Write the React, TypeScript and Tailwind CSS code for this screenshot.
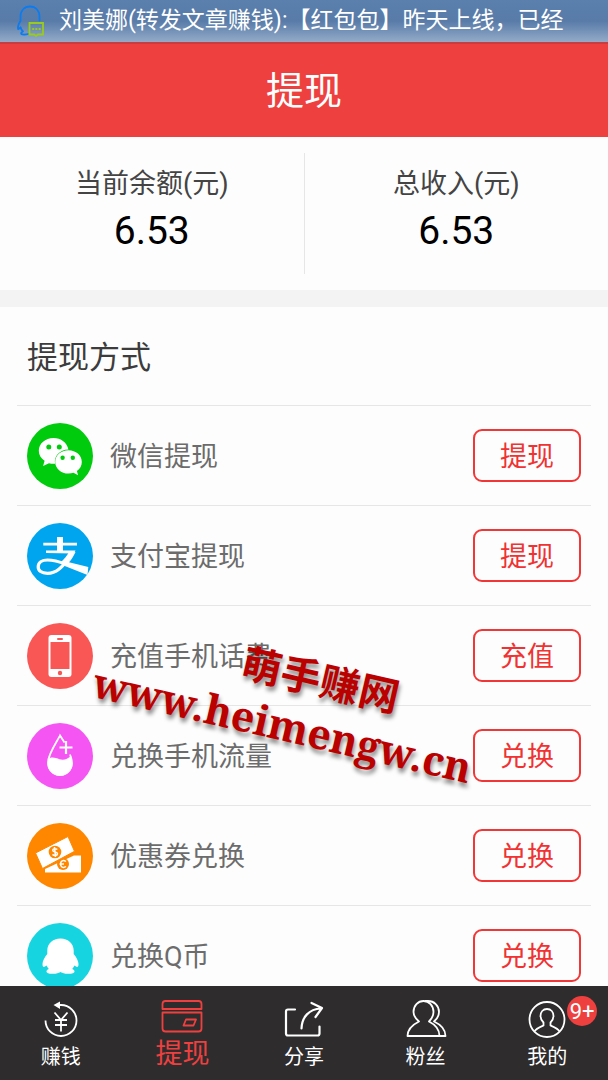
import React, { useState } from "react";

type TabId = "earn" | "withdraw" | "share" | "fans" | "mine";

interface Method {
  id: string;
  label: string;
  action: string;
  color: string;
  icon: React.ReactNode;
}

// Status bar notification icon
const QqMessageIcon: React.FC = () => (
  <svg className="w-7 h-8 shrink-0" viewBox="0 0 28 32" fill="none" aria-hidden="true">
    <path
      d="M23.500 15.500V11.500C23.500 5.500 19.500 1.500 14 1.500S4.500 5.500 4.500 11.500v4.500c-2 3-3 5.500-2.400 8 1 .2 1.700-.6 2.400-1.700.4 1.700 1.200 3 2.500 4.200-1.800.8-2.300 1.600-1.600 2.500.8.800 4.600.7 6.600 0"
      stroke="#0a7cf0"
      strokeWidth="1.800"
      strokeLinejoin="round"
      strokeLinecap="round"
    />
    <path d="M13.500 18h13.500v11.500h-5l-2 1.500-2-1.500h-4.500z" stroke="#9acb1c" strokeWidth="1.800" />
    <path d="M16.200 24h2m1.200 0h2m1.200 0h2" stroke="#9acb1c" strokeWidth="2" />
  </svg>
);

// Payment method glyphs, drawn inside a 66px disc
const WechatGlyph = (
  <>
    <path
      fill="#fff"
      d="M26.500 15c-8.200 0-14.700 5.600-14.700 12.800 0 4.200 2.200 7.600 5.800 9.900l-1.500 5.400 5.900-2.900c2 .5 3.700.6 6.100.5-1.500-7.300 4.500-14 13.300-14.200C40 19.500 34 15 26.500 15z"
    />
    <path
      fill="#fff"
      d="M41.500 27.300c-7.400 0-13.300 5-13.300 11.600s5.900 11.700 13.300 11.700c1.900 0 3.500-.3 5-.8l4.600 2.500-1.200-4.300c3-2.200 4.900-5.200 4.900-9.100 0-6.600-5.900-11.600-13.300-11.600z"
    />
    <g fill="#00cb0c">
      <circle cx="21.800" cy="24" r="2.500" />
      <circle cx="32.300" cy="24" r="2.500" />
      <circle cx="35.600" cy="34.700" r="2.200" />
      <circle cx="45.800" cy="34.700" r="2.200" />
    </g>
  </>
);

const AlipayGlyph = (
  <>
    <path fill="#fff" d="M30 14h6v5.800h14v2.800H36v5h12.500l-1.500 3-28-.6v-2.400h11v-5H16.300v-2.800H30z" />
    <path fill="#fff" d="M42 29h6.500c-2 4.500-4 7.500-6.500 10.300L61.300 44l-.8 8L36.500 42.500l-3-3c3.600-3 6.500-7 8.500-10.500z" />
    <path
      d="M41 36.500C35 44 29.500 50.300 20.500 50.300c-6 0-9.300-2.600-9.300-6.300 0-4.400 3.900-7 9.300-7 6.500 0 12.500 2 18.500 4.300"
      fill="none"
      stroke="#fff"
      strokeWidth="3.200"
    />
  </>
);

const PhoneGlyph = (
  <>
    <rect x="21.500" y="12" width="23" height="42" rx="3" fill="#fff" />
    <rect x="23.500" y="19" width="19" height="27" fill="#f95756" />
    <rect x="30" y="15" width="6" height="2" rx="1" fill="#f95756" />
    <circle cx="33" cy="50" r="2.200" fill="#f95756" />
  </>
);

const DropGlyph = (
  <>
    <path
      d="M37.500 19.500L33 12.500c-2 4.500-12 18.500-12 27A12 12 0 0 0 45 40.500c0-3.500-1-6.500-2-9"
      fill="none"
      stroke="#fff"
      strokeWidth="1.800"
    />
    <path
      fill="#fff"
      d="M21.500 36c3-2.500 7-1.200 11 .2 4 1.200 8 0 11.500-3.200 1 3 1.400 5 1.400 7.400a12.400 12.400 0 0 1-24.800 0c0-1.500.3-3 .9-4.400z"
    />
    <path d="M39 18v13M32.500 24.500h13" stroke="#fff" strokeWidth="2.200" />
  </>
);

const CouponGlyph = (
  <>
    <path fill="#fff" d="M18 46l29-13.500h7v17H18z" />
    <circle cx="36" cy="41" r="6" fill="#ff8700" />
    <path d="M39 38.500c-3-2-5.500-.5-5.500 2.500s2.500 4.500 5.500 2.500M32.500 41H37" fill="none" stroke="#fff" strokeWidth="1.500" />
    <path fill="#fff" stroke="#ff8700" strokeWidth="1" d="M8.500 30L41 13.500l6.500 14.800L15.500 45.500z" />
    <circle cx="28" cy="29" r="6.300" fill="#ff8700" />
    <path
      d="M30.300 26.500c-1.500-1.400-4.600-1-4.600.8 0 2.200 4.800 1.200 4.800 3.500 0 2-3.400 2.200-5 .6M27.500 24l1 10"
      fill="none"
      stroke="#fff"
      strokeWidth="1.500"
    />
  </>
);

const PenguinGlyph = (
  <path
    fill="#fff"
    d="M33.500 15.500c-7.800 0-13.200 5-13.200 12v3.500c-2.800 3.500-4.800 7-4.800 10 0 2.500.7 3.200 1.500 3 1.200-.5 1.800-1 2.500-1.500.6 1 1.300 2.300 2.300 3.500-1.500.6-2.300 1.300-2.300 2.500 0 2 3.500 2.500 7 2.300 2.800-.2 5-.9 7-1.900 2 1 4.200 1.700 7 1.900 3.500.2 7-.3 7-2.300 0-1.200-.8-1.900-2.300-2.500 1-1.200 1.700-2.500 2.300-3.500.7.5 1.300 1 2.500 1.500.8.200 1.500-.5 1.500-3 0-3-2-6.500-4.800-10v-3.500c0-7-5.400-12-13.200-12z"
  />
);

const METHODS: Method[] = [
  { id: "wechat", label: "微信提现", action: "提现", color: "text-[#00cb0c]", icon: WechatGlyph },
  { id: "alipay", label: "支付宝提现", action: "提现", color: "text-[#00a5f0]", icon: AlipayGlyph },
  { id: "phone", label: "充值手机话费", action: "充值", color: "text-[#f95756]", icon: PhoneGlyph },
  { id: "data", label: "兑换手机流量", action: "兑换", color: "text-[#f555f3]", icon: DropGlyph },
  { id: "coupon", label: "优惠券兑换", action: "兑换", color: "text-[#ff8700]", icon: CouponGlyph },
  { id: "qcoin", label: "兑换Q币", action: "兑换", color: "text-[#17d5e0]", icon: PenguinGlyph },
];

// Tab bar icons share a 44x40 box
const TABS: { id: TabId; label: string; badge?: string; icon: React.ReactNode }[] = [
  {
    id: "earn",
    label: "赚钱",
    icon: (
      <>
        <path d="M6.500 20.500a15.500 15.500 0 1 0 15.500-15.500h-3" />
        <path d="M21 1.500v7.500l-6.500-4z" fill="currentColor" stroke="none" />
        <path d="M15.500 12.500l6.500 7.500 6.500-7.500M22 20v11.500M16 20h12M16 25h12" />
      </>
    ),
  },
  {
    id: "withdraw",
    label: "提现",
    icon: (
      <>
        <path d="M2.500 9V4q0-3 3-3h33q3 0 3 3v5z" />
        <path d="M2.500 12.500h39v16q0 3-3 3h-33q-3 0-3-3z" />
        <path d="M26 19.500h10l-2.500 6H23.500z" />
      </>
    ),
  },
  {
    id: "share",
    label: "分享",
    icon: (
      <g strokeWidth="2.200" strokeLinecap="round">
        <path d="M13 9.500H6q-2 0-2 2V33.500q0 2 2 2h29.500q2 0 2-2v-7" />
        <path d="M19.500 28.500C20 17 27 9 39 8.500M29.500 3L40 8l-6.500 9" />
      </g>
    ),
  },
  {
    id: "fans",
    label: "粉丝",
    icon: (
      <>
        <path d="M15 21.500c-3-2.500-5.500-5.500-5.500-9.500C9.500 5.500 14 1 19.500 1S29.500 5.500 29.500 12c0 4-2 7-4.500 9.500 6 3 10.500 7 10.500 14.500h-32C3.500 28.500 9 24.500 15 21.500z" />
        <path d="M21 1h3c6 0 11 4.500 11 11 0 4-2 7-5 9.500 6.500 3 11.500 7 11.500 14.500h-6" />
      </>
    ),
  },
  {
    id: "mine",
    label: "我的",
    badge: "9+",
    icon: (
      <>
        <circle cx="22" cy="19.500" r="17.500" />
        <path d="M9.500 31.500c1-2.500 4.500-4 9-6v-3c-2-2-3-4-3-6.500 0-4 2.500-7 6.500-7s6.500 3 6.500 7c0 2.500-1 4.500-3 6.500v3c4.500 2 8 3.500 9 6" />
      </>
    ),
  },
];

const StatusBar: React.FC = () => (
  <div className="flex h-[42px] shrink-0 items-center gap-[15px] overflow-hidden bg-linear-to-b from-[#5b80ae] via-[#587ba8] to-[#94abc8] pl-4 text-white">
    <QqMessageIcon />
    <span className="whitespace-nowrap text-[23px] leading-[42px]">
      刘美娜(转发文章赚钱):【红包包】昨天上线，已经
    </span>
  </div>
);

const Stat: React.FC<{ label: string; value: string }> = ({ label, value }) => (
  <div className="flex flex-1 flex-col items-center pt-[13px]">
    <dt className="text-[27px] leading-9 text-[#444]">{label}</dt>
    <dd className="text-[39px] leading-[58px] text-black">{value}</dd>
  </div>
);

const MethodRow: React.FC<{ method: Method }> = ({ method }) => (
  <li className="flex h-[100px] items-center border-t border-[#e6e6e6] px-[10px]">
    <svg className={`size-[66px] shrink-0 ${method.color}`} viewBox="0 0 66 66" aria-hidden="true">
      <circle cx="33" cy="33" r="33" fill="currentColor" />
      {method.icon}
    </svg>
    <span id={`method-${method.id}`} className="ml-[17px] flex-1 pt-1 text-[27px] text-[#6c6c6c]">
      {method.label}
    </span>
    <button
      type="button"
      aria-describedby={`method-${method.id}`}
      className="h-[53px] w-[108px] rounded-[9px] border-2 border-[#f03636] pt-1 text-[27px] leading-[45px] text-[#f03232]"
    >
      {method.action}
    </button>
  </li>
);

const Watermark: React.FC = () => (
  <div className="pointer-events-none absolute top-[651px] left-[88px] w-[400px] rotate-13 text-center font-bold text-[#bb0000] [text-shadow:2px_4px_4px_rgba(0,0,0,0.45)]">
    <div className="pl-[54px] text-[40px] leading-[48px]">萌手赚网</div>
    <div className="whitespace-nowrap font-['Noto_Serif','DejaVu_Serif_Condensed','DejaVu_Serif',serif] text-[41px] leading-[52px]">
      www.heimengw.cn
    </div>
  </div>
);

export default function App() {
  const [tab, setTab] = useState<TabId>("withdraw");

  return (
    <div className="relative flex h-screen flex-col overflow-hidden bg-[#fdfdfd] font-[Roboto,'Noto_Sans_CJK_SC',sans-serif]">
      <StatusBar />
      <header className="flex h-[95px] shrink-0 items-center justify-center border-t-2 border-[#c93c40] bg-[#ef4040]">
        <h1 className="text-[38px] leading-none text-white">提现</h1>
      </header>

      <main className="min-h-0 flex-1 overflow-y-auto [scrollbar-width:none]">
        <dl className="flex h-[153px] py-4">
          <Stat label="当前余额(元)" value="6.53" />
          <div className="w-px bg-[#e6e6e6]" />
          <Stat label="总收入(元)" value="6.53" />
        </dl>

        <section className="border-t-[17px] border-[#f3f3f3] px-[17px]">
          <h2 className="pt-1 pl-[10px] text-[31px] leading-[94px] text-[#3c3c3c]">提现方式</h2>
          <ul>
            {METHODS.map((method) => (
              <MethodRow key={method.id} method={method} />
            ))}
          </ul>
        </section>
      </main>

      <nav className="flex h-[94px] shrink-0 bg-[#2e2c2d]">
        {TABS.map((item) => {
          const active = item.id === tab;
          return (
            <button
              key={item.id}
              type="button"
              onClick={() => setTab(item.id)}
              className={`relative flex flex-1 flex-col items-center pt-[14px] ${active ? "text-[#ef4040]" : "text-white"}`}
            >
              <svg
                className="h-10 w-11"
                viewBox="0 0 44 40"
                fill="none"
                stroke="currentColor"
                strokeWidth="1.800"
                strokeLinejoin="round"
                aria-hidden="true"
              >
                {item.icon}
              </svg>
              <span className={active ? "text-[27px] leading-7" : "text-[20px] leading-[34px]"}>
                {item.label}
              </span>
              {item.badge && (
                <span className="absolute top-[10px] left-1/2 ml-5 flex size-[30px] items-center justify-center rounded-full bg-[#ef4040] text-[22px] text-white">
                  {item.badge}
                </span>
              )}
            </button>
          );
        })}
      </nav>

      <Watermark />
    </div>
  );
}
